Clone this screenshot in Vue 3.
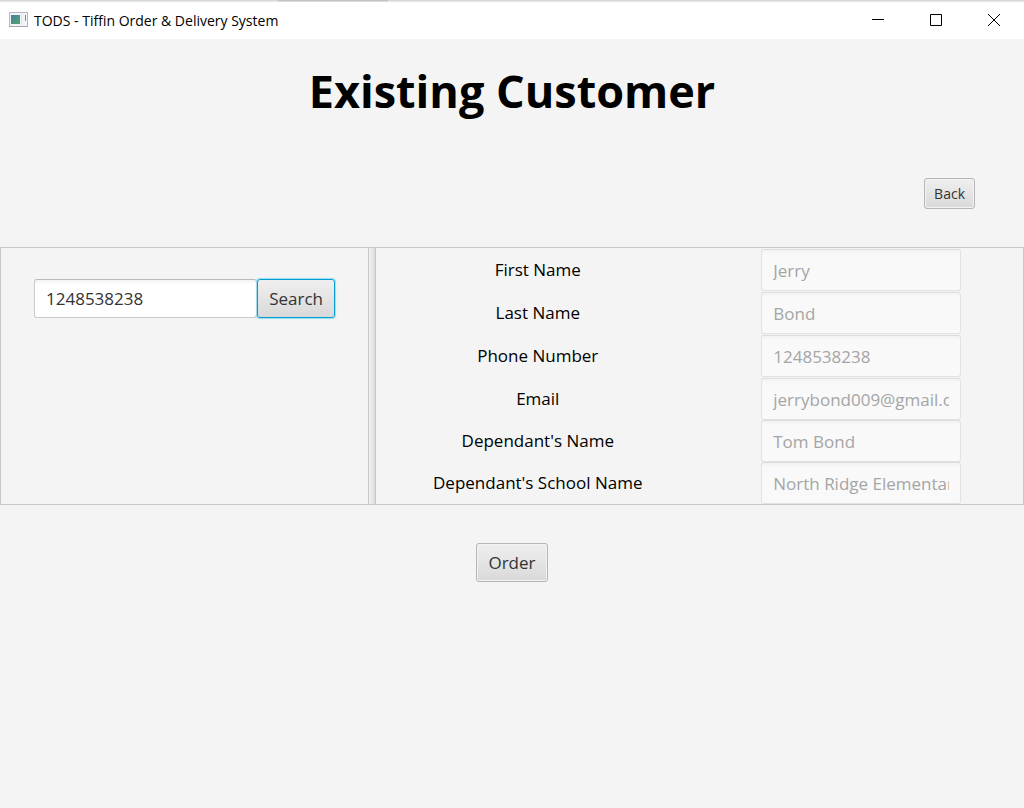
<script setup>
import { ref } from 'vue'

const query = ref('1248538238')
const fields = [
  { id: 'first-name', label: 'First Name', value: 'Jerry' },
  { id: 'last-name', label: 'Last Name', value: 'Bond' },
  { id: 'phone', label: 'Phone Number', value: '1248538238' },
  { id: 'email', label: 'Email', value: 'jerrybond009@gmail.com' },
  { id: 'dependant', label: "Dependant's Name", value: 'Tom Bond' },
  { id: 'school', label: "Dependant's School Name", value: 'North Ridge Elementary' },
]
</script>

<template>
  <div class="window">
    <header class="titlebar">
      <svg class="app-icon" width="19" height="16" viewBox="0 0 19 16" aria-hidden="true">
        <defs>
          <linearGradient id="screen" x1="0" y1="0" x2="1" y2="1">
            <stop offset="0" stop-color="#4a7fa5" />
            <stop offset="1" stop-color="#4fa568" />
          </linearGradient>
        </defs>
        <rect x="0.5" y="0.5" width="18" height="14" fill="#f1f3f6" stroke="#b4b9c2" />
        <path d="M0 14.500h19" stroke="#a2a7b0" />
        <rect x="2" y="3" width="9" height="9" fill="url(#screen)" />
        <path d="M12.500 2v11" stroke="#dde1e8" />
        <path d="M16.500 3v3" stroke="#5f92b0" />
        <path d="M16.500 6v3" stroke="#5fa886" />
      </svg>
      <span class="caption">TODS - Tiffin Order &amp; Delivery System</span>
      <div class="controls">
        <button type="button" aria-label="Minimize">
          <svg width="12" height="12" viewBox="0 0 12 12"><path d="M0 5.500h12" /></svg>
        </button>
        <button type="button" aria-label="Maximize">
          <svg width="12" height="12" viewBox="0 0 12 12"><path d="M.5.5h11v11H.5z" /></svg>
        </button>
        <button type="button" aria-label="Close">
          <svg width="12" height="12" viewBox="0 0 12 12"><path d="M0 0l12 12M12 0L0 12" /></svg>
        </button>
      </div>
    </header>

    <main>
      <h1>Existing Customer</h1>
      <div class="back-row">
        <button type="button" class="btn small">Back</button>
      </div>

      <div class="split">
        <form class="search" @submit.prevent>
          <input v-model="query" class="text" type="text" aria-label="Phone number" />
          <button type="submit" class="btn focused">Search</button>
        </form>
        <div class="divider"></div>
        <div class="details">
          <template v-for="f in fields" :key="f.id">
            <label :for="f.id">{{ f.label }}</label>
            <div class="cell">
              <input :id="f.id" class="text" type="text" :value="f.value" disabled />
            </div>
          </template>
        </div>
      </div>

      <div class="order-row">
        <button type="button" class="btn">Order</button>
      </div>
    </main>
  </div>
</template>

<style>
body {
  background: #f4f4f4;
}
</style>

<style scoped>
.window {
  min-height: 100vh;
  box-sizing: border-box;
  background: #f4f4f4;
  color: #000;
  font-family: "Open Sans", "Noto Sans", sans-serif;
  font-size: 17px;
  line-height: 24px;
}
.titlebar {
  display: flex;
  align-items: center;
  height: 39px;
  box-sizing: border-box;
  padding: 1px 1px 0 9px;
  background:
    linear-gradient(#b8b8b8, #e4e4e4) 278px 0 / 110px 2px no-repeat,
    linear-gradient(#d4d4d4, #ececec) 0 0 / 100% 2px no-repeat,
    #fff;
}
.app-icon {
  flex: none;
}
.caption {
  margin-left: 6px;
  padding-top: 2px;
  font-size: 14px;
  line-height: 20px;
  white-space: nowrap;
}
.controls {
  display: flex;
  align-self: stretch;
  margin-left: auto;
}
.controls button {
  display: flex;
  align-items: center;
  justify-content: center;
  width: 58px;
  padding: 0;
  border: 0;
  background: none;
}
.controls svg {
  fill: none;
  stroke: #000;
  stroke-width: 1;
}
h1 {
  margin: 0;
  padding-top: 20px;
  font-size: 45px;
  line-height: 64px;
  font-weight: 700;
  text-align: center;
}
.back-row {
  display: flex;
  justify-content: flex-end;
  padding: 55px 49px 38px 0;
}
.btn {
  box-sizing: border-box;
  height: 39px;
  padding: 0 11px;
  border: 1px solid #b5b5b5;
  border-radius: 3px;
  background: linear-gradient(#efefef, #d9d9d9);
  box-shadow: inset 0 0 0 1px #f3f3f3;
  color: #333;
  font: inherit;
}
.btn.small {
  height: 31px;
  padding: 0 9px;
  font-size: 14px;
}
.btn.focused {
  border-color: #039ed3;
  box-shadow: 0 0 1px 1px #9bdcf0;
}
.split {
  display: grid;
  grid-template-columns: 367fr auto 647fr;
  border: 1px solid #c8c8c8;
}
.search {
  display: flex;
  align-items: flex-start;
  min-width: 0;
  padding: 31px 33px 0;
}
.divider {
  width: 6px;
  border: solid #c8c8c8;
  border-width: 0 1px;
  background: linear-gradient(90deg, #f2f2f2, #dcdcdc);
}
.details {
  display: grid;
  min-width: 0;
  grid-template-columns: 1fr 1fr;
  grid-template-rows: repeat(4, 43px) repeat(2, 42px);
  align-items: end;
  text-align: center;
}
.details label {
  line-height: 42px;
}
.cell {
  display: flex;
  justify-content: center;
}
.text {
  box-sizing: border-box;
  min-width: 0;
  padding: 0 11px;
  border: 1px solid #cacaca;
  border-top-color: #b9bbbb;
  border-radius: 3px;
  background: linear-gradient(#f3f3f3, #fff 5px);
  color: #333;
  font: inherit;
}
.search .text {
  flex: 1;
  height: 39px;
}
.details .text {
  width: 200px;
  height: 42px;
  border-color: #dcdcdc #e2e2e2 #e2e2e2;
  background: linear-gradient(#f3f3f3, #f9f9f9 5px);
  color: #a5a5a5;
}
.order-row {
  display: flex;
  justify-content: center;
  padding: 38px 0;
}
</style>
